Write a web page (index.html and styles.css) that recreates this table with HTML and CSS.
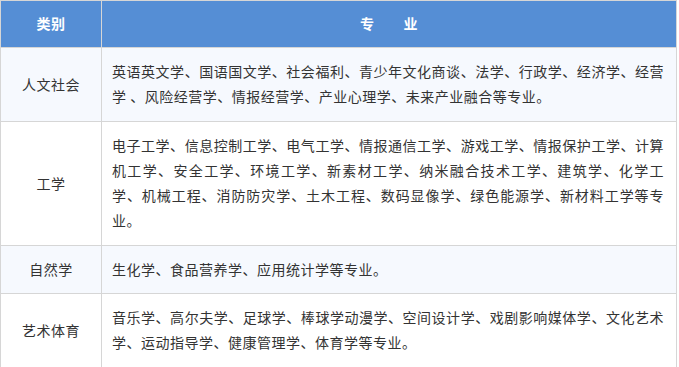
FILE: index.html
```html
<!DOCTYPE html>
<html lang="zh-CN">
<head>
<meta charset="utf-8">
<title>专业</title>
<link rel="stylesheet" href="styles.css">
</head>
<body>
<table class="majors">
  <thead>
    <tr>
      <th class="cat">类别</th>
      <th class="list">专　　业</th>
    </tr>
  </thead>
  <tbody>
    <tr class="alt">
      <td class="cat">人文社会</td>
      <td class="list">英语英文学、国语国文学、社会福利、青少年文化商谈、法学、行政学、经济学、经营学 、风险经营学、情报经营学、产业心理学、未来产业融合等专业。</td>
    </tr>
    <tr>
      <td class="cat">工学</td>
      <td class="list"><span class="block jl">电子工学、信息控制工学、电气工学、情报通信工学、游戏工学、情报保护工学、计算机工学、安全工学、环境工学、新素材工学、纳米融合技术工学、建筑学、化学工</span><span class="block">学、机械工程、消防防灾学、土木工程、数码显像学、绿色能源学、新材料工学等专业。</span></td>
    </tr>
    <tr class="alt">
      <td class="cat">自然学</td>
      <td class="list">生化学、食品营养学、应用统计学等专业。</td>
    </tr>
    <tr>
      <td class="cat">艺术体育</td>
      <td class="list">音乐学、高尔夫学、足球学、棒球学动漫学、空间设计学、戏剧影响媒体学、文化艺术学、运动指导学、健康管理学、体育学等专业。</td>
    </tr>
  </tbody>
</table>
</body>
</html>
```

FILE: styles.css
```css
html, body {
  margin: 0;
  padding: 0;
  background: #ffffff;
}

body {
  font-family: "Noto Sans CJK SC", "Noto Sans", sans-serif;
  font-size: 14px;
  color: #333333;
}

.majors {
  width: 677px;
  border-collapse: collapse;
  table-layout: fixed;
}

.majors th,
.majors td {
  border: 1px solid #d6d6d6;
  letter-spacing: 0.5px;
  line-height: 25.3px;
}

.majors th {
  background: #558ed5;
  color: #ffffff;
  font-weight: bold;
  height: 46px;
  padding: 0;
  text-align: center;
  vertical-align: middle;
}

.majors thead th + th {
  border-left-color: #e6eef8;
}

.majors th.cat,
.majors td.cat {
  width: 100px;
}

.majors td {
  padding: 11px 12px 11px 10px;
  vertical-align: middle;
}

.majors td.cat {
  text-align: center;
  padding-left: 0;
  padding-right: 0;
}

.majors td.list {
  text-align: justify;
}

.majors tr.alt td {
  background: #f6f9fe;
}

.block {
  display: block;
}

.jl {
  text-align-last: justify;
}
```
